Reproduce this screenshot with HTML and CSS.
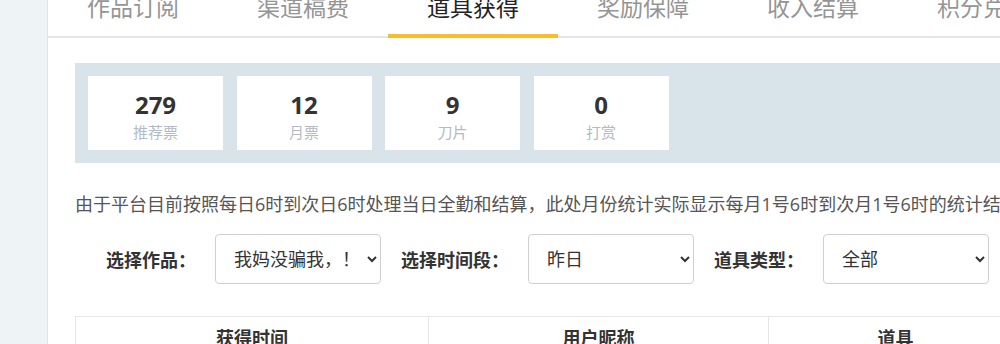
FILE: index.html
```html
<!DOCTYPE html>
<html lang="zh-CN">
<head>
    <meta charset="UTF-8">
    <meta name="viewport" content="width=device-width, initial-scale=1.0">
    <title>道具获得</title>
    <link rel="stylesheet" href="styles.css">
</head>
<body>
    <div class="layout">
        <div class="sidebar"></div>
        <div class="main">
            <div class="tabs">
                <div class="tab">作品订阅</div>
                <div class="tab">渠道稿费</div>
                <div class="tab active">道具获得</div>
                <div class="tab">奖励保障</div>
                <div class="tab">收入结算</div>
                <div class="tab">积分兑换</div>
            </div>

            <div class="content">
                <div class="stats">
                    <div class="stat-card">
                        <div class="stat-num">279</div>
                        <div class="stat-label">推荐票</div>
                    </div>
                    <div class="stat-card">
                        <div class="stat-num">12</div>
                        <div class="stat-label">月票</div>
                    </div>
                    <div class="stat-card">
                        <div class="stat-num">9</div>
                        <div class="stat-label">刀片</div>
                    </div>
                    <div class="stat-card">
                        <div class="stat-num">0</div>
                        <div class="stat-label">打赏</div>
                    </div>
                </div>

                <p class="notice">由于平台目前按照每日6时到次日6时处理当日全勤和结算，此处月份统计实际显示每月1号6时到次月1号6时的统计结果。</p>

                <div class="filter-row">
                    <label class="filter-label first" for="bookSelect">选择作品：</label>
                    <select id="bookSelect" class="filter-select">
                        <option>我妈没骗我，！</option>
                    </select>
                    <label class="filter-label" for="timeSelect">选择时间段：</label>
                    <select id="timeSelect" class="filter-select">
                        <option>昨日</option>
                        <option>近7日</option>
                        <option>近30日</option>
                    </select>
                    <label class="filter-label" for="typeSelect">道具类型：</label>
                    <select id="typeSelect" class="filter-select">
                        <option>全部</option>
                        <option>推荐票</option>
                        <option>月票</option>
                        <option>刀片</option>
                    </select>
                </div>

                <table class="record-table">
                    <colgroup>
                        <col class="col-time">
                        <col class="col-user">
                        <col class="col-item">
                    </colgroup>
                    <tr>
                        <th>获得时间</th>
                        <th>用户昵称</th>
                        <th>道具</th>
                    </tr>
                </table>
            </div>
        </div>
    </div>
</body>
</html>
```

FILE: styles.css
```css
body {
    margin: 0;
    overflow: hidden;
    font-family: "Open Sans", "Noto Sans CJK SC", sans-serif;
    color: #333;
    background-color: #fff;
}
.layout {
    display: flex;
    width: 1049px;
    height: 344px;
}
.sidebar {
    width: 47px;
    flex: none;
    background-color: #eef3f6;
    border-right: 1px solid #e0e5e9;
}
.main {
    flex: 1;
    background-color: #fff;
}
.tabs {
    display: flex;
    margin-top: -22px;
    border-bottom: 2px solid #e6e6e6;
}
.tab {
    position: relative;
    width: 170px;
    flex: none;
    height: 58px;
    line-height: 58px;
    text-align: center;
    font-size: 23px;
    color: #959595;
    white-space: nowrap;
}
.tab.active {
    color: #222;
}
.tab.active::after {
    content: "";
    position: absolute;
    left: 0;
    right: 0;
    bottom: -2px;
    height: 4px;
    background-color: #f7bd2c;
}
.content {
    padding: 0 27px;
}
.stats {
    display: flex;
    gap: 13.5px;
    margin-top: 25px;
    padding: 13px;
    background-color: #d9e4ea;
}
.stat-card {
    width: 135px;
    height: 74px;
    box-sizing: border-box;
    padding-top: 14px;
    background-color: #fff;
    text-align: center;
}
.stat-num {
    font-size: 24px;
    font-weight: bold;
    line-height: 30px;
    color: #333;
}
.stat-label {
    font-size: 15px;
    line-height: 24px;
    color: #b4bac5;
}
.notice {
    margin: 28px 0 0;
    font-size: 18px;
    line-height: 26px;
    color: #555;
    white-space: nowrap;
}
.filter-row {
    display: flex;
    align-items: center;
    margin-top: 17px;
}
.filter-label {
    margin: 0 19px 0 20px;
    font-size: 18px;
    font-weight: bold;
    color: #333;
    white-space: nowrap;
}
.filter-label.first {
    margin-left: 31px;
}
.filter-select {
    width: 166px;
    height: 50px;
    flex: none;
    padding: 0 8px 0 14px;
    border: 1px solid #cfcfcf;
    border-radius: 4px;
    background-color: #fff;
    font-family: "Open Sans", "Noto Sans CJK SC", sans-serif;
    font-size: 18px;
    color: #333;
}
.record-table {
    width: 947px;
    margin-top: 32px;
    border-collapse: collapse;
    table-layout: fixed;
}
.col-time {
    width: 353px;
}
.col-user {
    width: 340px;
}
.col-item {
    width: 254px;
}
.record-table th {
    border: 1px solid #e6e6e6;
    padding: 9px 10px;
    font-size: 18px;
    line-height: 24px;
    font-weight: bold;
    text-align: center;
    color: #333;
}
```
